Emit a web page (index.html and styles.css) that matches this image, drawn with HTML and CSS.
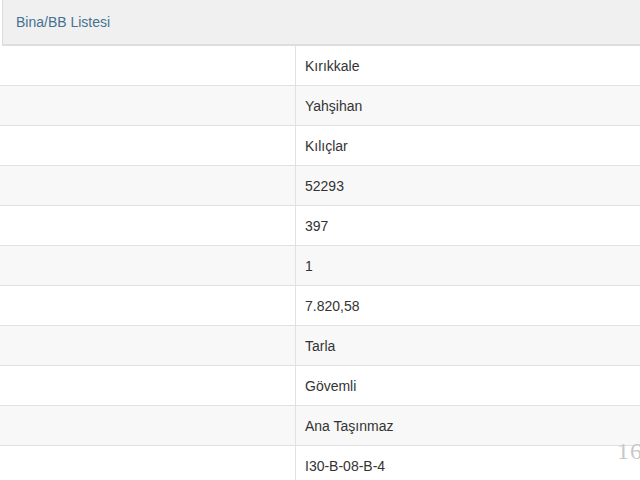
FILE: index.html
```html
<!DOCTYPE html>
<html>
<head>
<meta charset="utf-8">
<link rel="stylesheet" href="styles.css">
</head>
<body>
<div class="page">
  <div class="tab-bar"><span class="tab-title">Bina/BB Listesi</span></div>
  <div class="table">
    <div class="row"><div class="label"></div><div class="value">Kırıkkale</div></div>
    <div class="row alt"><div class="label"></div><div class="value">Yahşihan</div></div>
    <div class="row"><div class="label"></div><div class="value">Kılıçlar</div></div>
    <div class="row alt"><div class="label"></div><div class="value">52293</div></div>
    <div class="row"><div class="label"></div><div class="value">397</div></div>
    <div class="row alt"><div class="label"></div><div class="value">1</div></div>
    <div class="row"><div class="label"></div><div class="value">7.820,58</div></div>
    <div class="row alt"><div class="label"></div><div class="value">Tarla</div></div>
    <div class="row"><div class="label"></div><div class="value">Gövemli</div></div>
    <div class="row alt"><div class="label"></div><div class="value">Ana Taşınmaz</div></div>
    <div class="row"><div class="label"></div><div class="value">I30-B-08-B-4</div></div>
  </div>
  <div class="watermark">16</div>
</div>
</body>
</html>
```
FILE: styles.css
```css
html, body {
  margin: 0;
  padding: 0;
  background: #fff;
}
body {
  font-family: "Liberation Sans", Arial, sans-serif;
  color: #333;
  width: 640px;
  height: 480px;
  overflow: hidden;
}
.page {
  position: relative;
  width: 640px;
  height: 480px;
  overflow: hidden;
}
.tab-bar {
  margin-left: 2px;
  height: 44px;
  background: #f0f0f0;
  border-left: 1px solid #dcdcdc;
  border-bottom: 2px solid #dedede;
  display: flex;
  align-items: center;
  padding-left: 13px;
}
.tab-title {
  font-size: 14px;
  color: #457291;
}
.table {
  display: flex;
  flex-direction: column;
}
.row {
  display: flex;
  height: 39px;
  border-bottom: 1px solid #e0e0e0;
  background: #fff;
}
.row.alt {
  background: #f8f8f8;
}
.label {
  width: 295px;
  border-right: 1px solid #e2e2e2;
}
.value {
  display: flex;
  align-items: center;
  padding-left: 9px;
  font-size: 14px;
  color: #333;
}
.watermark {
  position: absolute;
  left: 617px;
  top: 438px;
  font-family: "Liberation Serif", serif;
  font-size: 24px;
  color: #c8c8c8;
  letter-spacing: 1px;
}
```
